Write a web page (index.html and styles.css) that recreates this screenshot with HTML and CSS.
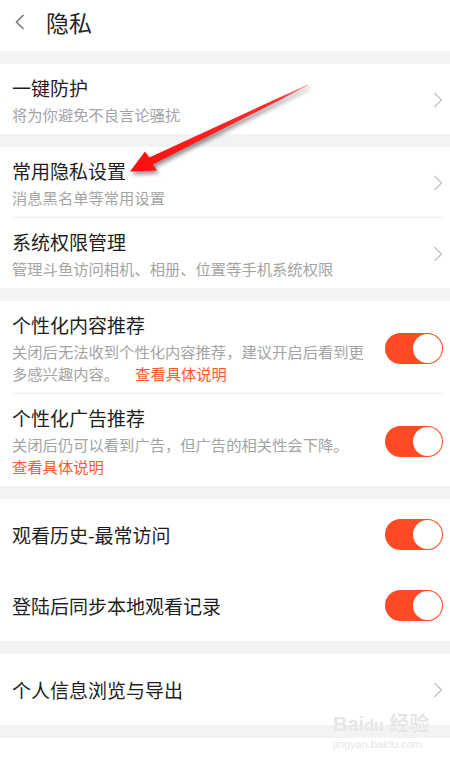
FILE: index.html
```html
<!DOCTYPE html>
<html lang="zh-CN">
<head>
  <meta charset="UTF-8">
  <meta name="viewport" content="width=device-width, initial-scale=1.0">
  <title>隐私</title>
  <link rel="stylesheet" href="styles.css">
</head>
<body>
  <div class="page">
    <header class="topbar">
      <svg class="back" width="10" height="16" viewBox="0 0 10 16">
        <polyline points="8.5,1 1.5,8 8.5,15" fill="none" stroke="#7a7a7a" stroke-width="1.6"/>
      </svg>
      <h1>隐私</h1>
    </header>

    <div class="groups">
      <section class="group">
        <div class="row">
          <div class="text">
            <div class="title">一键防护</div>
            <div class="desc">将为你避免不良言论骚扰</div>
          </div>
          <svg class="chevron" width="10" height="16" viewBox="0 0 10 16">
            <polyline points="1.5,1 8.5,8 1.5,15" fill="none" stroke="#c6c6c6" stroke-width="1.5"/>
          </svg>
        </div>
      </section>

      <section class="group">
        <div class="row">
          <div class="text">
            <div class="title">常用隐私设置</div>
            <div class="desc">消息黑名单等常用设置</div>
          </div>
          <svg class="chevron" width="10" height="16" viewBox="0 0 10 16">
            <polyline points="1.5,1 8.5,8 1.5,15" fill="none" stroke="#c6c6c6" stroke-width="1.5"/>
          </svg>
        </div>
        <div class="row">
          <div class="text">
            <div class="title">系统权限管理</div>
            <div class="desc">管理斗鱼访问相机、相册、位置等手机系统权限</div>
          </div>
          <svg class="chevron" width="10" height="16" viewBox="0 0 10 16">
            <polyline points="1.5,1 8.5,8 1.5,15" fill="none" stroke="#c6c6c6" stroke-width="1.5"/>
          </svg>
        </div>
      </section>

      <section class="group">
        <div class="row">
          <div class="text narrow">
            <div class="title">个性化内容推荐</div>
            <div class="desc">关闭后无法收到个性化内容推荐，建议开启后看到更多感兴趣内容。<a class="more" href="#">查看具体说明</a></div>
          </div>
          <span class="toggle on"></span>
        </div>
        <div class="row">
          <div class="text narrow">
            <div class="title">个性化广告推荐</div>
            <div class="desc">关闭后仍可以看到广告，但广告的相关性会下降。</div>
            <a class="more block" href="#">查看具体说明</a>
          </div>
          <span class="toggle on"></span>
        </div>
      </section>

      <section class="group">
        <div class="row plain">
          <div class="text narrow">
            <div class="title">观看历史-最常访问</div>
          </div>
          <span class="toggle on"></span>
        </div>
        <div class="row plain no-line">
          <div class="text narrow">
            <div class="title">登陆后同步本地观看记录</div>
          </div>
          <span class="toggle on"></span>
        </div>
      </section>

      <section class="group">
        <div class="row plain">
          <div class="text">
            <div class="title">个人信息浏览与导出</div>
          </div>
          <svg class="chevron" width="10" height="16" viewBox="0 0 10 16">
            <polyline points="1.5,1 8.5,8 1.5,15" fill="none" stroke="#c6c6c6" stroke-width="1.5"/>
          </svg>
        </div>
      </section>
    </div>

    <!-- annotation arrow drawn over the screenshot -->
    <svg class="arrow" width="450" height="200" viewBox="0 0 450 200">
      <defs>
        <linearGradient id="arrowFill" x1="308" y1="85" x2="130" y2="171" gradientUnits="userSpaceOnUse">
          <stop offset="0" stop-color="#ffb0b0"/>
          <stop offset="0.15" stop-color="#ff3030"/>
          <stop offset="1" stop-color="#ff0d0d"/>
        </linearGradient>
      </defs>
      <polygon points="130,171.5 145,151.5 149.3,157.4 307.8,84.4 308.3,85.6 152.7,164.6 157,170.5" fill="url(#arrowFill)"/>
    </svg>

    <div class="watermark">
      <div class="wm-logo">Bai<span class="wm-du">du</span> 经验</div>
      <div class="wm-url">jingyan.baidu.com</div>
    </div>
  </div>
</body>
</html>
```

FILE: styles.css
```css
body {
  margin: 0;
  background: #fff;
  font-family: "Noto Sans CJK SC", "Noto Sans", sans-serif;
  color: #1e1e1e;
}
.page {
  position: relative;
  width: 450px;
  min-height: 760px;
}
.topbar {
  height: 51px;
  box-sizing: border-box;
  padding-bottom: 8px;
  display: flex;
  align-items: center;
}
.back {
  margin-left: 15px;
}
.topbar h1 {
  margin: 0 0 0 21px;
  font-size: 23px;
  font-weight: 400;
  line-height: 30px;
  color: #222;
}
.groups {
  background: #f1f3f4;
  padding: 13px 0;
  display: flex;
  flex-direction: column;
  gap: 13px;
}
.group {
  background: #fff;
}
.row {
  display: flex;
  align-items: center;
  margin: 0 7px 0 12px;
  padding: 11px 0 9px;
}
.row + .row {
  border-top: 1px solid #eeeeee;
}
.row.plain {
  padding: 0;
  height: 71px;
}
.row.no-line {
  border-top: none;
}
.text {
  flex: 1;
  min-width: 0;
}
.text.narrow {
  margin-right: 18px;
}
.title {
  font-size: 19px;
  line-height: 25px;
  color: #1e1e1e;
}
.desc {
  margin-top: 3px;
  font-size: 15.3px;
  line-height: 22px;
  color: #a4a4a4;
}
.more {
  margin-left: 16px;
  font-size: 15.3px;
  line-height: 22px;
  color: #ff5a2c;
  text-decoration: none;
}
.more.block {
  display: block;
  margin-left: 0;
}
.chevron {
  flex: none;
}
.toggle {
  flex: none;
  position: relative;
  width: 58px;
  height: 31px;
  border-radius: 16px;
  background: #ddd;
}
.toggle.on {
  background: #ff4b25;
}
.toggle::after {
  content: "";
  position: absolute;
  top: 1px;
  left: 1px;
  width: 29px;
  height: 29px;
  border-radius: 50%;
  background: #fff;
}
.toggle.on::after {
  left: auto;
  right: 1px;
}
.arrow {
  position: absolute;
  left: 0;
  top: 0;
  filter: drop-shadow(2px 3px 2px rgba(0, 0, 0, 0.45));
  pointer-events: none;
}
.watermark {
  position: absolute;
  left: 333px;
  top: 712px;
  color: #e6e6e6;
  pointer-events: none;
}
.wm-logo {
  font-family: "Liberation Sans", "Noto Sans CJK SC", sans-serif;
  font-size: 20px;
  font-weight: 700;
  line-height: 24px;
  text-shadow: 0 0 1px #fff;
}
.wm-du {
  font-size: 16px;
}
.wm-url {
  font-family: "Liberation Sans", sans-serif;
  font-size: 11px;
  line-height: 12px;
}
```
